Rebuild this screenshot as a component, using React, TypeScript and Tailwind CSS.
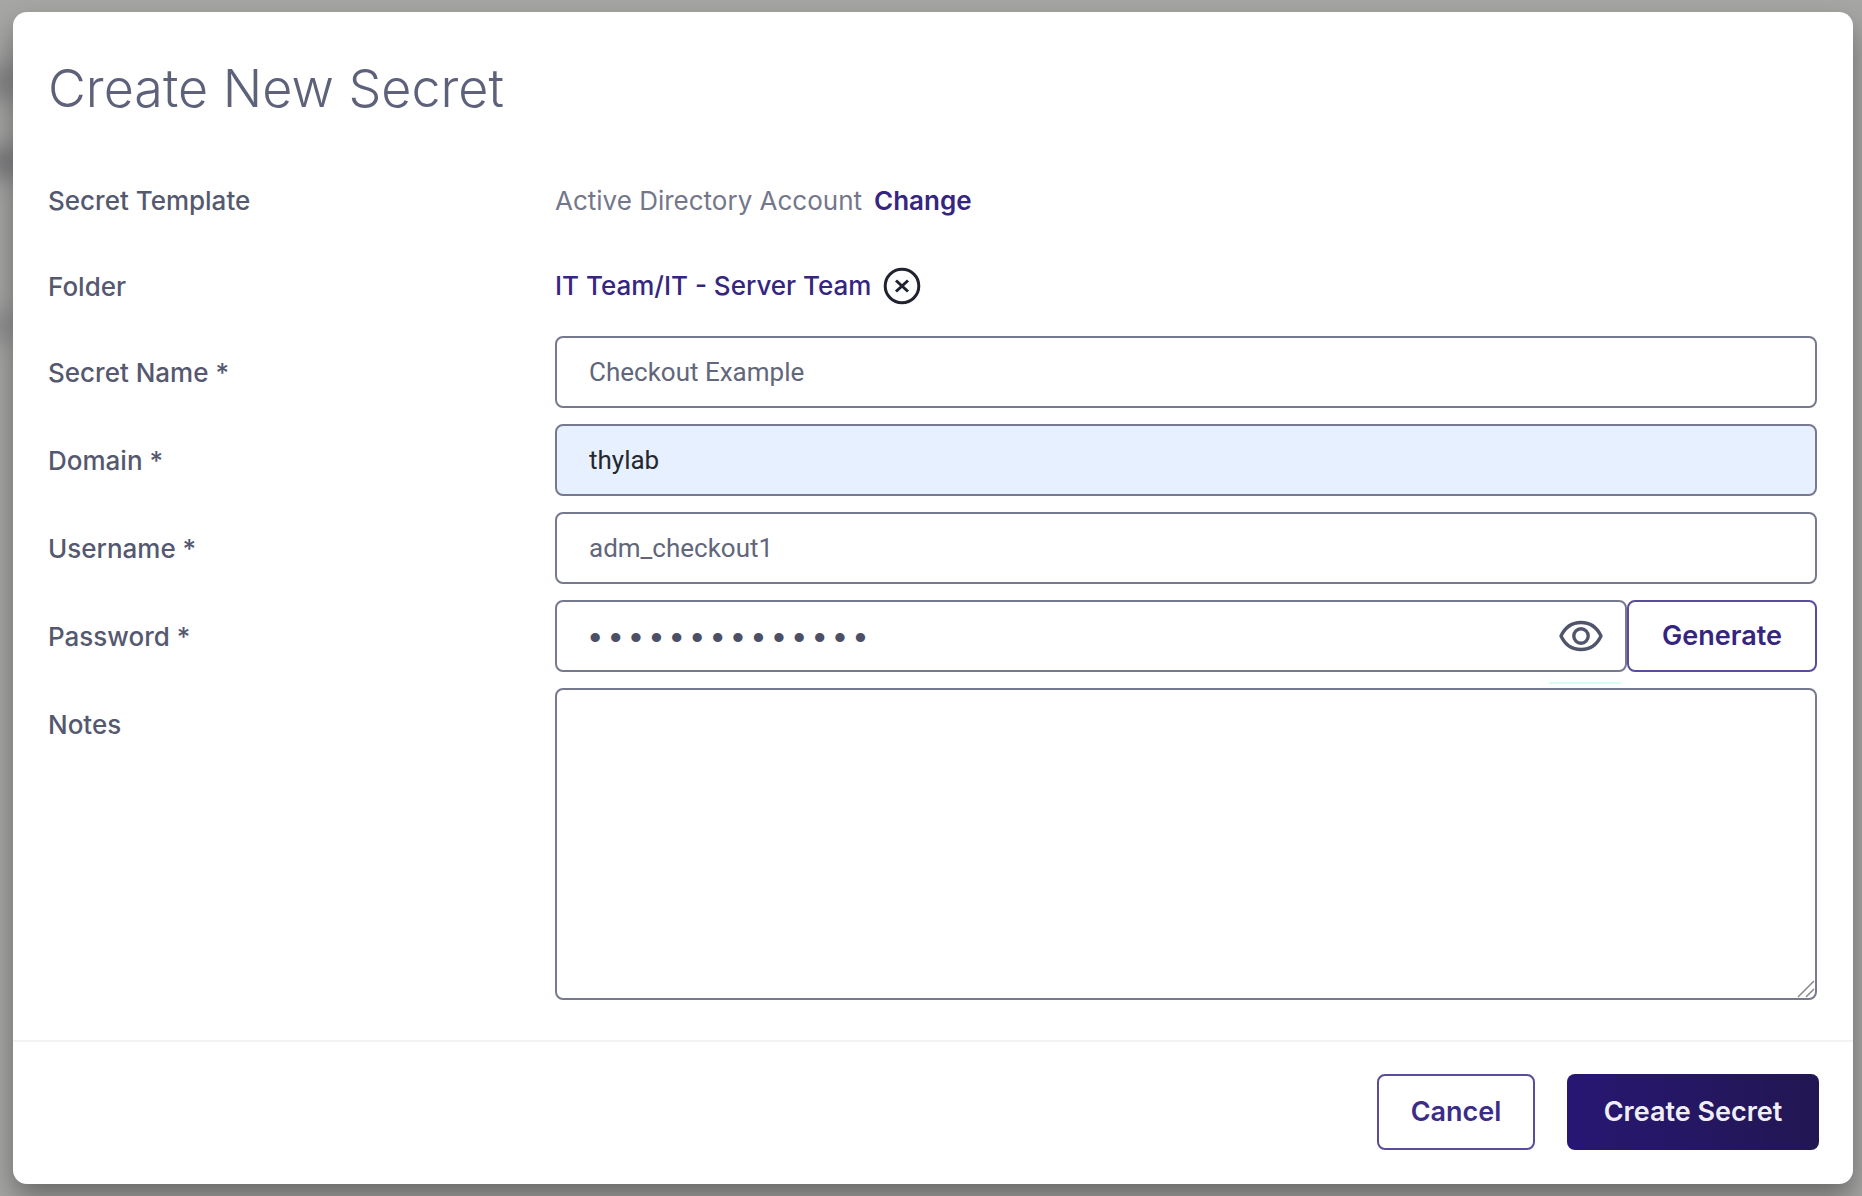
import { useState } from "react";
import type { ReactNode } from "react";

const fieldClass =
  "block h-[72px] w-full rounded-lg border-2 border-[#777a8f] bg-white px-8 font-['Roboto','Liberation_Sans',sans-serif] text-[26px] text-[#62667a] outline-none focus:border-[#3b2d87]";

function Label({ htmlFor, children }: { htmlFor: string; children: ReactNode }) {
  return (
    <label htmlFor={htmlFor} className="flex h-[74px] items-center font-medium text-[#555970]">
      {children}
    </label>
  );
}

function RowTitle({ children }: { children: ReactNode }) {
  return <div className="flex h-[70px] items-center font-medium text-[#555970]">{children}</div>;
}

function RemoveIcon() {
  return (
    <svg viewBox="0 0 38 38" className="size-[38px]" fill="none" stroke="#20222f" strokeWidth="3" aria-hidden="true">
      <circle cx="19" cy="19" r="16.8" />
      <path d="M13 13.5 25 24.5M25 13.5 13 24.5" />
    </svg>
  );
}

function EyeIcon() {
  return (
    <svg viewBox="0 0 44 32" className="h-8 w-11" fill="none" stroke="#51556b" strokeWidth="3.4" aria-hidden="true">
      <path d="M2 16C6 7.500 13 2.500 22 2.500S38 7.500 42 16C38 24.500 31 29.500 22 29.500S6 24.500 2 16Z" strokeLinejoin="round" />
      <circle cx="22" cy="16" r="7.200" />
    </svg>
  );
}

export default function App() {
  const [reveal, setReveal] = useState(false);
  return (
    <div className="relative min-h-screen overflow-hidden bg-[#a6a6a5] py-3 pl-[13px] pr-[9px] font-['Inter','Liberation_Sans',sans-serif] text-[26px] leading-9">
      <div className="absolute -left-4 top-16 h-9 w-9 rounded-full bg-[#7c7c7e] blur-md" />
      <div className="absolute -left-4 top-[148px] h-7 w-9 rounded-full bg-[#6c6c70] blur-md" />
      <div className="absolute -left-4 top-[312px] h-7 w-8 rounded-full bg-[#848486] blur-md" />

      <form
        role="dialog"
        aria-labelledby="dialog-title"
        onSubmit={(e) => e.preventDefault()}
        className="relative rounded-[14px] bg-white shadow-[0_14px_28px_rgba(0,0,0,0.36)]"
      >
        <div className="pb-10 pl-[35px] pr-9 pt-10">
          <h1 id="dialog-title" className="text-[52px] font-light leading-[74px] text-[#5d617a]">
            Create New Secret
          </h1>

          <div className="mt-10 flex flex-col gap-4">
            <div className="grid grid-cols-[507px_1fr] gap-y-4">
              <RowTitle>Secret Template</RowTitle>
              <div className="flex h-[70px] items-center gap-3">
                <span className="text-[#74778a]">Active Directory Account</span>
                <a href="#change" className="font-semibold text-[#36257f] hover:underline">Change</a>
              </div>

              <RowTitle>Folder</RowTitle>
              <div className="flex h-[68px] items-center gap-3">
                <a href="#folder" className="font-medium text-[#36257f] hover:underline">IT Team/IT - Server Team</a>
                <button type="button" aria-label="Clear folder"><RemoveIcon /></button>
              </div>
            </div>

            <div className="-mt-0.5 grid grid-cols-[507px_1fr] gap-y-3.5">
              <Label htmlFor="name">Secret Name *</Label>
              <input id="name" type="text" defaultValue="Checkout Example" className={fieldClass} />

              <Label htmlFor="domain">Domain *</Label>
              <input
                id="domain"
                type="text"
                defaultValue="thylab"
                className="block h-[72px] w-full rounded-lg border-2 border-[#777a8f] bg-[#e7f0fe] px-8 font-['Roboto','Liberation_Sans',sans-serif] text-[26px] text-[#25272e] outline-none"
              />

              <Label htmlFor="username">Username *</Label>
              <input id="username" type="text" defaultValue="adm_checkout1" className={fieldClass} />

              <Label htmlFor="password">Password *</Label>
              <div className="flex h-[72px]">
                <div className="relative flex-1">
                  <input
                    id="password"
                    type={reveal ? "text" : "password"}
                    defaultValue="Xk4!pQ9zLm2#vT"
                    className="block h-[72px] w-full rounded-lg border-2 border-[#777a8f] bg-white pl-7 pr-20 pt-2 font-['Liberation_Mono',monospace] text-[34px] text-[#4c5067] outline-none"
                  />
                  <button
                    type="button"
                    aria-label="Show password"
                    onClick={() => setReveal(!reveal)}
                    className="absolute inset-y-0 right-6 flex items-center"
                  >
                    <EyeIcon />
                  </button>
                  <span className="absolute -bottom-3 right-1.5 h-0.5 w-18 bg-[#d6fff9]" />
                </div>
                <button type="button" className="h-[72px] w-[190px] rounded-lg border-2 border-[#5a4c9c] text-[27px] font-semibold text-[#36257f]">
                  Generate
                </button>
              </div>

              <Label htmlFor="notes">Notes</Label>
              <div className="relative">
                <textarea
                  id="notes"
                  className="block h-[312px] w-full resize-none rounded-lg border-2 border-[#777a8f] bg-white px-8 py-4 font-['Roboto','Liberation_Sans',sans-serif] text-[26px] text-[#62667a] outline-none"
                />
                <svg viewBox="0 0 18 18" className="pointer-events-none absolute bottom-0.5 right-0.5 size-[18px]" stroke="#8a8a8a" strokeWidth="1.6" aria-hidden="true">
                  <path d="M1 17 17 1M9 17 17 9" />
                </svg>
              </div>
            </div>
          </div>
        </div>

        <div className="flex justify-end gap-8 border-t-2 border-[#f3f3f3] px-[34px] pb-[34px] pt-8">
          <button type="button" className="h-[76px] w-[158px] rounded-lg border-2 border-[#5a4c9c] text-[27px] font-semibold text-[#3b2d87]">
            Cancel
          </button>
          <button type="submit" className="h-[76px] w-[252px] rounded-lg bg-linear-to-r from-[#281773] to-[#221652] text-[27px] font-semibold text-[#f0eef8]">
            Create Secret
          </button>
        </div>
      </form>
    </div>
  );
}
